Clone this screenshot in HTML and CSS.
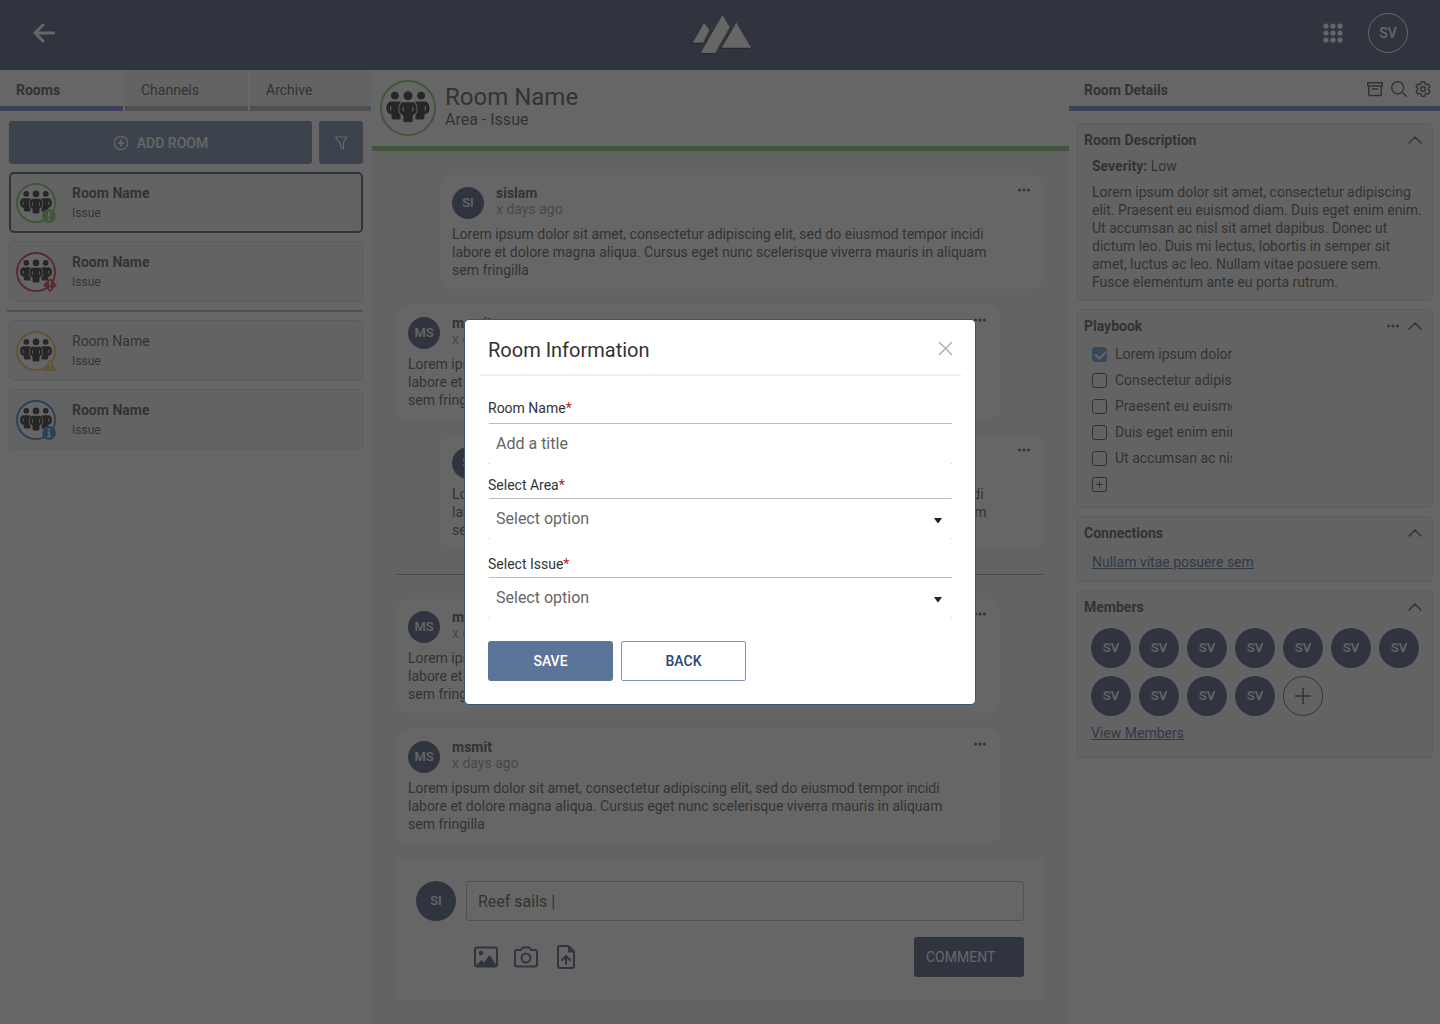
FILE: index.html
```html
<!DOCTYPE html>
<html lang="en">
  <head>
    <meta charset="UTF-8" />
    <meta name="viewport" content="width=device-width, initial-scale=1.0" />
    <title>Room Information</title>
    <link rel="stylesheet" href="styles.css">
  </head>
  <body>
    <!-- shared icons -->
    <svg class="sprite" aria-hidden="true">
      <symbol id="people" viewBox="0 0 40 40">
        <g fill="#000">
          <circle cx="10.3" cy="10.8" r="2.9" />
          <circle cx="29.7" cy="10.8" r="2.9" />
          <path d="M7.5 15.2h7v13.3H9.2a1.4 1.4 0 0 1-1.4-1.4v-2.2C5.4 24.2 4 22.8 4 20.3c0-2.6 1.3-5.1 3.5-5.1z" />
          <path d="M32.5 15.2h-7v13.3h5.3a1.4 1.4 0 0 0 1.4-1.4v-2.2c2.4-.7 3.8-2.1 3.8-4.6 0-2.6-1.3-5.1-3.5-5.1z" />
          <path d="M16.5 15.8h7c2 0 3 3 3 5.2s-1.2 3.8-3 4.6V29a1.6 1.6 0 0 1-1.6 1.6h-3.8A1.6 1.6 0 0 1 16.500 29v-3.4c-1.8-.8-3-2.4-3-4.6s1-5.2 3-5.2z" stroke="#fff" stroke-width="1.2" paint-order="stroke" />
          <circle cx="20" cy="10.9" r="3.3" />
        </g>
        <path d="M7.200 19v2.600M32.800 19v2.600M16.400 19.500v2.800M23.600 19.500v2.800" stroke="#fff" stroke-width=".8" stroke-linecap="round" />
      </symbol>
      <symbol id="chevron" viewBox="0 0 14 8">
        <path d="M1 7l6-6 6 6" fill="none" stroke="currentColor" stroke-width="1.5" stroke-linecap="round" stroke-linejoin="round" />
      </symbol>
      <symbol id="dots" viewBox="0 0 12 4">
        <g fill="currentColor"><circle cx="1.600" cy="2" r="1.5" /><circle cx="6" cy="2" r="1.5" /><circle cx="10.400" cy="2" r="1.5" /></g>
      </symbol>
    </svg>

    <div class="app">
      <header class="topbar">
        <button class="icon-btn back" aria-label="Back">
          <svg width="24" height="20" viewBox="0 0 24 20"><path d="M11 2L3 10l8 8M3.500 10H21.500" fill="none" stroke="#fff" stroke-width="3" stroke-linecap="round" stroke-linejoin="round" /></svg>
        </button>
        <svg class="logo" width="64" height="44" viewBox="24 33 192 132">
          <g fill="#060803" transform="translate(-4 4)">
            <path d="M72 69l16 21-19 38H38zM127 45l22 37-44 77H62zM169 68l44 75h-88z" />
          </g>
          <path d="M72 69l16 21-19 38H38zM127 45l22 37-44 77H62zM169 68l44 75h-88z" fill="#fff" />
        </svg>
        <div class="topbar-right">
          <button class="icon-btn" aria-label="Apps">
            <svg width="20" height="20" viewBox="0 0 20 20"><g fill="#fff"><circle cx="3" cy="3" r="2.600" /><circle cx="10" cy="3" r="2.600" /><circle cx="17" cy="3" r="2.600" /><circle cx="3" cy="10" r="2.600" /><circle cx="10" cy="10" r="2.600" /><circle cx="17" cy="10" r="2.600" /><circle cx="3" cy="17" r="2.600" /><circle cx="10" cy="17" r="2.600" /><circle cx="17" cy="17" r="2.600" /></g></svg>
          </button>
          <button class="profile">SV</button>
        </div>
      </header>

      <div class="columns">
        <aside class="rooms">
          <nav class="tabs">
            <a class="tab active" href="#">Rooms</a>
            <a class="tab" href="#">Channels</a>
            <a class="tab" href="#">Archive</a>
          </nav>
          <div class="rooms-body">
            <div class="room-actions">
              <button class="add-room">
                <svg width="16" height="16" viewBox="0 0 16 16"><path d="M8 5v6M5 8h6" stroke="currentColor" stroke-width="1.4" stroke-linecap="round" /><circle cx="8" cy="8" r="6.7" fill="none" stroke="currentColor" stroke-width="1.2" /></svg>
                ADD ROOM
              </button>
              <button class="filter" aria-label="Filter">
                <svg width="14" height="14" viewBox="0 0 14 14"><path d="M1.500 1h11.500L9.500 6.500V13L6.500 10.500V8z" fill="none" stroke="currentColor" stroke-width="1.2" stroke-linejoin="round" /></svg>
              </button>
            </div>

            <a class="room selected" href="#">
              <svg class="room-icon green" viewBox="0 0 40 40">
                <circle class="ring" cx="20" cy="20" r="19" /><use href="#people" />
                <circle class="badge" cx="33" cy="33" r="7" />
                <path d="M33 29.500v3.500" stroke="#fff" stroke-width="2" stroke-linecap="round" /><circle cx="33" cy="36.600" r="1.100" fill="#fff" />
              </svg>
              <div><div class="room-name">Room Name</div><div class="room-issue">Issue</div></div>
            </a>
            <a class="room" href="#">
              <svg class="room-icon red" viewBox="0 0 40 40">
                <circle class="ring" cx="20" cy="20" r="19" /><use href="#people" />
                <path class="badge" d="M34 26l7 7-7 7-7-7z" />
                <path d="M34 29.500v3.500" stroke="#fff" stroke-width="1.600" stroke-linecap="round" /><circle cx="34" cy="36.300" r="1" fill="#fff" />
              </svg>
              <div><div class="room-name">Room Name</div><div class="room-issue">Issue</div></div>
            </a>
            <hr class="divider">
            <a class="room read" href="#">
              <svg class="room-icon yellow" viewBox="0 0 40 40">
                <circle class="ring" cx="20" cy="20" r="19" /><use href="#people" />
                <path class="badge" d="M34 28l7 12H27z" />
                <path d="M34 31.500v3.500" stroke="#fff" stroke-width="1.400" stroke-linecap="round" /><circle cx="34" cy="37.500" r=".9" fill="#fff" />
              </svg>
              <div><div class="room-name">Room Name</div><div class="room-issue">Issue</div></div>
            </a>
            <a class="room" href="#">
              <svg class="room-icon blue" viewBox="0 0 40 40">
                <circle class="ring" cx="20" cy="20" r="19" /><use href="#people" />
                <circle class="badge" cx="33" cy="33" r="7" />
                <path d="M31.500 32.200h1.700v4M31.300 36.400h3.600" fill="none" stroke="#fff" stroke-width="1.500" /><circle cx="32.900" cy="29.500" r="1.100" fill="#fff" />
              </svg>
              <div><div class="room-name">Room Name</div><div class="room-issue">Issue</div></div>
            </a>
          </div>
        </aside>

        <main class="chat">
          <div class="chat-head">
            <svg class="chat-icon" viewBox="0 0 56 56">
              <circle cx="28" cy="28" r="27" fill="#fff" stroke="#63bf50" stroke-width="2" />
              <use href="#people" x="1" y="1" width="54" height="54" />
            </svg>
            <div>
              <h1>Room Name</h1>
              <p>Area - Issue</p>
            </div>
          </div>

          <div class="feed">
            <article class="message mine">
              <div class="message-head">
                <span class="avatar small">SI</span>
                <div class="meta"><div class="author">sislam</div><div class="time">x days ago</div></div>
                <button class="icon-btn more" aria-label="More"><svg width="12" height="4"><use href="#dots" /></svg></button>
              </div>
              <p>Lorem ipsum dolor sit amet, consectetur adipiscing elit, sed do eiusmod tempor incidi<br>labore et dolore magna aliqua. Cursus eget nunc scelerisque viverra mauris in aliquam<br>sem fringilla</p>
            </article>
            <article class="message">
              <div class="message-head">
                <span class="avatar small">MS</span>
                <div class="meta"><div class="author">msmit</div><div class="time">x days ago</div></div>
                <button class="icon-btn more" aria-label="More"><svg width="12" height="4"><use href="#dots" /></svg></button>
              </div>
              <p>Lorem ipsum dolor sit amet, consectetur adipiscing elit, sed do eiusmod tempor incidi<br>labore et dolore magna aliqua. Cursus eget nunc scelerisque viverra mauris in aliquam<br>sem fringilla</p>
            </article>
            <article class="message mine">
              <div class="message-head">
                <span class="avatar small">SI</span>
                <div class="meta"><div class="author">sislam</div><div class="time">x days ago</div></div>
                <button class="icon-btn more" aria-label="More"><svg width="12" height="4"><use href="#dots" /></svg></button>
              </div>
              <p>Lorem ipsum dolor sit amet, consectetur adipiscing elit, sed do eiusmod tempor incidi<br>labore et dolore magna aliqua. Cursus eget nunc scelerisque viverra mauris in aliquam<br>sem fringilla</p>
            </article>
            <hr class="feed-divider">
            <article class="message">
              <div class="message-head">
                <span class="avatar small">MS</span>
                <div class="meta"><div class="author">msmit</div><div class="time">x days ago</div></div>
                <button class="icon-btn more" aria-label="More"><svg width="12" height="4"><use href="#dots" /></svg></button>
              </div>
              <p>Lorem ipsum dolor sit amet, consectetur adipiscing elit, sed do eiusmod tempor incidi<br>labore et dolore magna aliqua. Cursus eget nunc scelerisque viverra mauris in aliquam<br>sem fringilla</p>
            </article>
            <article class="message">
              <div class="message-head">
                <span class="avatar small">MS</span>
                <div class="meta"><div class="author">msmit</div><div class="time">x days ago</div></div>
                <button class="icon-btn more" aria-label="More"><svg width="12" height="4"><use href="#dots" /></svg></button>
              </div>
              <p>Lorem ipsum dolor sit amet, consectetur adipiscing elit, sed do eiusmod tempor incidi<br>labore et dolore magna aliqua. Cursus eget nunc scelerisque viverra mauris in aliquam<br>sem fringilla</p>
            </article>

            <form class="composer">
              <div class="composer-row">
                <span class="avatar">SI</span>
                <input type="text" aria-label="Comment" value="Reef sails |">
              </div>
              <div class="composer-row tools">
                <button type="button" class="icon-btn" aria-label="Image">
                  <svg width="24" height="24" viewBox="0 0 24 24"><rect x="1" y="2.500" width="22" height="19" rx="2" fill="none" stroke="currentColor" stroke-width="2" /><circle cx="7" cy="8" r="2.200" fill="currentColor" /><path d="M2 20l5.500-5 2.500 2.500 5.500-7.500L22 19.500V21H2z" fill="currentColor" /></svg>
                </button>
                <button type="button" class="icon-btn" aria-label="Camera">
                  <svg width="24" height="24" viewBox="0 0 24 24" fill="none" stroke="currentColor" stroke-width="2"><path d="M3 5h4l1.500-2.500h7L17 5h4a2 2 0 0 1 2 2v12.500a2 2 0 0 1-2 2H3a2 2 0 0 1-2-2V7a2 2 0 0 1 2-2z" stroke-linejoin="round" /><circle cx="12" cy="13" r="4.500" /></svg>
                </button>
                <button type="button" class="icon-btn" aria-label="Upload file">
                  <svg width="24" height="24" viewBox="0 0 24 24"><path d="M14.500 1H6a2 2 0 0 0-2 2v18a2 2 0 0 0 2 2h12a2 2 0 0 0 2-2V6.500z" fill="none" stroke="currentColor" stroke-width="2" stroke-linejoin="round" /><path d="M14 1v6.500h6z" fill="currentColor" /><path d="M12 19v-7M8 15l4-4 4 4" fill="none" stroke="currentColor" stroke-width="2" stroke-linecap="round" stroke-linejoin="round" /></svg>
                </button>
                <button type="button" class="comment-btn">COMMENT</button>
              </div>
            </form>
          </div>
        </main>

        <aside class="details">
          <div class="details-head">
            <h2>Room Details</h2>
            <button class="icon-btn" aria-label="Archive">
              <svg width="16" height="16" viewBox="0 0 16 16" fill="none" stroke="currentColor" stroke-width="1.400" stroke-linejoin="round"><rect x=".7" y="1.700" width="14.600" height="3.300" /><path d="M1.700 5v8.500a1 1 0 0 0 1 1h10.600a1 1 0 0 0 1-1V5M5.500 8h5" stroke-linecap="round" /></svg>
            </button>
            <button class="icon-btn" aria-label="Search">
              <svg width="16" height="16" viewBox="0 0 16 16" fill="none" stroke="currentColor" stroke-width="1.400" stroke-linecap="round"><circle cx="6.700" cy="6.700" r="6" /><path d="M11 11l4.300 4.300" /></svg>
            </button>
            <button class="icon-btn" aria-label="Settings">
              <svg width="16" height="16" viewBox="0 0 16 16" fill="none" stroke="currentColor" stroke-width="1.400" stroke-linejoin="round"><path d="M6.500.8h3l.5 2 1.300.8 2-.6 1.600 2.600-1.400 1.500v1.800l1.400 1.500-1.600 2.600-2-.6-1.300.8-.5 2h-3l-.5-2-1.300-.8-2 .6L1.100 10.400 2.500 8.900V7.100L1.100 5.600 2.700 3l2 .6L6 2.800z" /><circle cx="8" cy="8" r="2.300" /></svg>
            </button>
          </div>

          <div class="panels">
            <section class="panel">
              <div class="panel-head">
                <h3>Room Description</h3>
                <button class="icon-btn" aria-label="Collapse"><svg width="14" height="8"><use href="#chevron" /></svg></button>
              </div>
              <div class="panel-body">
                <p class="severity"><b>Severity:</b> Low</p>
                <p>Lorem ipsum dolor sit amet, consectetur adipiscing<br>elit. Praesent eu euismod diam. Duis eget enim enim.<br>Ut accumsan ac nisl sit amet dapibus. Donec ut<br>dictum leo. Duis mi lectus, lobortis in semper sit<br>amet, luctus ac leo. Nullam vitae posuere sem.<br>Fusce elementum ante eu porta rutrum.</p>
              </div>
            </section>

            <section class="panel">
              <div class="panel-head">
                <h3>Playbook</h3>
                <button class="icon-btn" aria-label="More"><svg width="12" height="4"><use href="#dots" /></svg></button>
                <button class="icon-btn" aria-label="Collapse"><svg width="14" height="8"><use href="#chevron" /></svg></button>
              </div>
              <div class="panel-body checklist">
                <label><input type="checkbox" checked><span>Lorem ipsum dolor</span></label>
                <label><input type="checkbox"><span>Consectetur adipiscing</span></label>
                <label><input type="checkbox"><span>Praesent eu euismod</span></label>
                <label><input type="checkbox"><span>Duis eget enim enim</span></label>
                <label><input type="checkbox"><span>Ut accumsan ac nisl</span></label>
                <button class="icon-btn add-item" aria-label="Add item">
                  <svg width="15" height="15" viewBox="0 0 15 15"><rect x=".5" y=".5" width="14" height="14" rx="1.500" fill="none" stroke="currentColor" /><path d="M7.500 4v7M4 7.500h7" stroke="currentColor" /></svg>
                </button>
              </div>
            </section>

            <section class="panel">
              <div class="panel-head">
                <h3>Connections</h3>
                <button class="icon-btn" aria-label="Collapse"><svg width="14" height="8"><use href="#chevron" /></svg></button>
              </div>
              <div class="panel-body connections">
                <a href="#">Nullam vitae posuere sem</a>
              </div>
            </section>

            <section class="panel">
              <div class="panel-head">
                <h3>Members</h3>
                <button class="icon-btn" aria-label="Collapse"><svg width="14" height="8"><use href="#chevron" /></svg></button>
              </div>
              <div class="panel-body members">
                <div class="member-list">
                  <span class="avatar">SV</span>
                  <span class="avatar">SV</span>
                  <span class="avatar">SV</span>
                  <span class="avatar">SV</span>
                  <span class="avatar">SV</span>
                  <span class="avatar">SV</span>
                  <span class="avatar">SV</span>
                  <span class="avatar">SV</span>
                  <span class="avatar">SV</span>
                  <span class="avatar">SV</span>
                  <span class="avatar">SV</span>
                  <button class="add-member" aria-label="Add member">
                    <svg width="16" height="16" viewBox="0 0 16 16"><path d="M8 0v16M0 8h16" stroke="currentColor" stroke-width="1.500" /></svg>
                  </button>
                </div>
                <a href="#">View Members</a>
              </div>
            </section>
          </div>
        </aside>
      </div>
    </div>

    <div class="overlay">
      <form class="modal" role="dialog" aria-labelledby="modal-title">
        <div class="modal-head">
          <h2 id="modal-title">Room Information</h2>
          <button type="button" class="icon-btn close" aria-label="Close">
            <svg width="15" height="15" viewBox="0 0 15 15"><path d="M1.500 1.500l12 12M13.500 1.500l-12 12" stroke="currentColor" stroke-width="1.700" stroke-linecap="round" /></svg>
          </button>
        </div>
        <div class="modal-body">
          <div class="field title-field">
            <label for="room-name">Room Name<span class="required">*</span></label>
            <input class="control" id="room-name" type="text" placeholder="Add a title">
          </div>
          <div class="field">
            <label for="area">Select Area<span class="required">*</span></label>
            <div class="select">
              <select class="control" id="area"><option>Select option</option></select>
              <svg width="8" height="5" viewBox="0 0 8 5"><path d="M0 0h8L4.500 5h-1z" /></svg>
            </div>
          </div>
          <div class="field">
            <label for="issue">Select Issue<span class="required">*</span></label>
            <div class="select">
              <select class="control" id="issue"><option>Select option</option></select>
              <svg width="8" height="5" viewBox="0 0 8 5"><path d="M0 0h8L4.500 5h-1z" /></svg>
            </div>
          </div>
          <div class="modal-actions">
            <button type="button" class="btn primary">SAVE</button>
            <button type="button" class="btn outline">BACK</button>
          </div>
        </div>
      </form>
    </div>
  </body>
</html>
```
FILE: styles.css
```css
* {
  box-sizing: border-box;
}

body {
  margin: 0;
  font-family: Roboto, "Liberation Sans", sans-serif;
  font-size: 14px;
  line-height: 18px;
  color: #333;
  background-color: #fff;
}

h1, h2, h3, p {
  margin: 0;
}

button, input, select {
  font-family: inherit;
  color: inherit;
}

button {
  cursor: pointer;
}

a {
  color: #2b4a7d;
}

svg {
  display: block;
  flex: none;
}

.sprite {
  position: absolute;
  width: 0;
  height: 0;
}

.icon-btn {
  display: flex;
  padding: 0;
  border: none;
  background: none;
}

.app {
  display: flex;
  flex-direction: column;
  min-height: 100vh;
}

/* top bar */
.topbar {
  display: grid;
  grid-template-columns: 1fr auto 1fr;
  align-items: center;
  height: 70px;
  padding: 0 32px 4px;
  background-color: #2b3b5f;
}

.topbar-right {
  display: flex;
  justify-content: flex-end;
  align-items: center;
  gap: 25px;
}

.profile {
  width: 40px;
  height: 40px;
  padding: 0;
  border: 1px solid #fff;
  border-radius: 50%;
  background: none;
  color: #fff;
  font-size: 14px;
  font-weight: 500;
}

.columns {
  flex: 1;
  display: grid;
  grid-template-columns: 372px 1fr 371px;
}

/* left column */
.tabs {
  display: grid;
  grid-template-columns: 123px 123px 1fr;
  gap: 2px;
  padding-right: 1px;
}

.tab {
  height: 41px;
  padding: 11px 16px 0;
  border-bottom: 5px solid #98a8b4;
  background-color: #f4f4f4;
  color: #333;
  text-decoration: none;
}

.tab.active {
  border-color: #5b67c8;
  background-color: #fff;
  font-weight: 700;
}

.rooms-body {
  display: flex;
  flex-direction: column;
  gap: 8px;
  padding: 10px 9px;
}

.room-actions {
  display: flex;
  gap: 7px;
}

.add-room,
.filter {
  display: flex;
  justify-content: center;
  align-items: center;
  gap: 8px;
  height: 43px;
  border: none;
  border-radius: 3px;
  background-color: #5b7599;
  color: #fff;
  font-size: 14px;
  font-weight: 500;
}

.add-room {
  flex: 1;
}

.filter {
  width: 44px;
}

.room {
  display: flex;
  align-items: center;
  gap: 16px;
  height: 61px;
  padding: 0 6px;
  border: 1px solid #d8d8d8;
  border-radius: 5px;
  background-color: #f4f4f4;
  color: #333;
  text-decoration: none;
}

.room.selected {
  padding: 0 5px;
  border: 2px solid #24384a;
}

.room-icon {
  width: 40px;
  height: 40px;
  overflow: visible;
}

.ring {
  fill: #fff;
  stroke: currentColor;
  stroke-width: 2;
}

.badge {
  fill: currentColor;
}

.green { color: #63bf50; }
.red { color: #c8141c; }
.yellow { color: #e8b840; }
.blue { color: #1f6cc0; }

.room-name {
  line-height: 20px;
  font-weight: 700;
}

.read .room-name {
  font-weight: 400;
}

.room-issue {
  font-size: 12px;
  line-height: 20px;
}

.divider {
  width: calc(100% + 2px);
  margin: 0 0 0 -2px;
  border: none;
  border-top: 2px solid #aaa;
}

/* chat */
.chat {
  display: flex;
  flex-direction: column;
  background-color: #f1f1f1;
}

.chat-head {
  display: flex;
  gap: 9px;
  height: 81px;
  padding: 10px 8px 0;
  border-bottom: 5px solid #63bf50;
  background-color: #fff;
}

.chat-icon {
  width: 56px;
  height: 56px;
}

.chat-head h1 {
  padding-top: 3px;
  font-size: 24px;
  font-weight: 400;
  line-height: 28px;
}

.chat-head p {
  font-size: 16px;
  line-height: 18px;
}

.feed {
  display: flex;
  flex-direction: column;
  gap: 16px;
  padding: 24px 25px 24px 24px;
}

.message {
  width: calc(100% - 44px);
  padding: 12px 12px 10px;
  border-radius: 12px;
  background-color: #fff;
}

.message.mine {
  align-self: flex-end;
}

.message-head {
  display: flex;
  gap: 12px;
  margin-bottom: 6px;
  line-height: 16px;
}

.meta {
  margin-top: -2px;
}

.author {
  font-weight: 700;
}

.time {
  color: #888;
}

.more {
  margin: 1px 2px 0 auto;
  height: 4px;
}

.avatar {
  display: flex;
  justify-content: center;
  align-items: center;
  flex: none;
  width: 40px;
  height: 40px;
  border-radius: 50%;
  background-color: #2b3b5f;
  color: #fff;
  font-size: 13px;
  font-weight: 500;
}

.avatar.small {
  width: 32px;
  height: 32px;
}

.feed-divider {
  width: 100%;
  margin: 9px 0 8px;
  border: none;
  border-top: 1px solid #888;
}

.composer {
  padding: 22px 20px;
  border-radius: 4px;
  background-color: #fff;
}

.composer-row {
  display: flex;
  align-items: center;
  gap: 10px;
}

.composer input {
  flex: 1;
  height: 40px;
  padding: 0 11px;
  border: 1px solid #aaa;
  border-radius: 3px;
  background: none;
  font-size: 16px;
}

.tools {
  gap: 16px;
  margin-top: 16px;
  padding-left: 58px;
  color: #2b3b5f;
}

.comment-btn {
  width: 110px;
  height: 40px;
  margin-left: auto;
  padding: 0 12px;
  border: none;
  border-radius: 3px;
  background-color: #2b3b5f;
  color: #fff;
  font-size: 14px;
  text-align: left;
}

/* right column */
.details-head {
  display: flex;
  align-items: center;
  gap: 8px;
  height: 41px;
  padding: 2px 9px 0 15px;
  border-bottom: 5px solid #5b67c8;
}

.details-head h2 {
  flex: 1;
  padding-top: 2px;
  font-size: 14px;
  line-height: 18px;
}

.panels {
  display: flex;
  flex-direction: column;
  gap: 8px;
  padding: 12px 7px 12px 8px;
}

.panel {
  padding: 6px 10px 9px 6px;
  border: 1px solid #d8d8d8;
  border-radius: 5px;
  background-color: #f4f4f4;
}

.panel-head {
  display: flex;
  align-items: center;
  gap: 9px;
  height: 20px;
}

.panel-head h3 {
  flex: 1;
  font-size: 14px;
  line-height: 20px;
}

.panel-body {
  padding: 7px 0 0 8px;
}

.severity {
  margin-bottom: 8px;
}

.checklist {
  display: flex;
  flex-direction: column;
  gap: 8px;
  padding: 9px 0 4px 8px;
}

.checklist label {
  display: flex;
  align-items: center;
  gap: 8px;
}

.checklist input {
  position: relative;
  appearance: none;
  width: 15px;
  height: 15px;
  margin: 0;
  border: 1px solid #333;
  border-radius: 3px;
}

.checklist input:checked {
  border-color: #4089d0;
  background-color: #4089d0;
}

.checklist input:checked::after {
  content: "";
  position: absolute;
  left: 4px;
  top: 1px;
  width: 5px;
  height: 8px;
  border: solid #fff;
  border-width: 0 2px 2px 0;
  transform: rotate(45deg);
}

.checklist span {
  width: 117px;
  overflow: hidden;
  white-space: nowrap;
}

.add-item {
  align-self: flex-start;
  padding: 2px 0;
}

.connections {
  padding: 10px 0 1px 8px;
}

.members {
  padding: 11px 0 6px 7px;
}

.member-list {
  display: flex;
  flex-wrap: wrap;
  gap: 8px;
  margin: 0 -8px 8px 0;
}

.add-member {
  display: flex;
  justify-content: center;
  align-items: center;
  width: 40px;
  height: 40px;
  padding: 0;
  border: 1px solid #333;
  border-radius: 50%;
  background: none;
}

/* modal */
.overlay {
  position: fixed;
  inset: 0;
  display: flex;
  justify-content: center;
  align-items: center;
  background-color: rgba(51, 51, 51, 0.75);
}

.modal {
  width: 512px;
  max-width: 100%;
  padding: 15px 14px 23px 15px;
  border: 1px solid #3d5375;
  border-radius: 5px;
  background-color: #fff;
}

.modal-head {
  display: flex;
  justify-content: space-between;
  padding: 3px 8px 12px;
  border-bottom: 2px solid #f0f0f0;
}

.modal-head h2 {
  font-size: 20px;
  font-weight: 400;
  line-height: 24px;
}

.close {
  height: 15px;
  margin-top: 3px;
  color: #b0b8bb;
}

.modal-body {
  padding: 23px 8px 0;
}

.field {
  display: flex;
  flex-direction: column;
  gap: 4px;
  margin-bottom: 16px;
}

.title-field {
  gap: 6px;
  margin-bottom: 12px;
}

.required {
  color: #b71c1c;
}

/* only the top edge and the bottom corners of a field are drawn */
.control {
  width: 100%;
  height: 41px;
  padding: 0 7px;
  border: 1px solid transparent;
  border-top-color: #bbb;
  border-radius: 2px;
  appearance: none;
  background:
    linear-gradient(#ccc, #ccc) left bottom / 2px 1px no-repeat border-box,
    linear-gradient(#ccc, #ccc) right bottom / 2px 1px no-repeat border-box;
  font-size: 16px;
  color: #666;
}

.control::placeholder {
  color: #666;
}

.select {
  position: relative;
}

.select svg {
  position: absolute;
  right: 11px;
  top: 20px;
  fill: #222;
}

.modal-actions {
  display: flex;
  gap: 8px;
  margin-top: 23px;
}

.btn {
  width: 125px;
  height: 40px;
  border-radius: 3px;
  font-size: 14px;
  font-weight: 500;
}

.primary {
  border: none;
  background-color: #5b7599;
  color: #fff;
}

.outline {
  border: 1px solid #8094b5;
  border-radius: 2px;
  background-color: #fff;
  color: #2b4573;
}
```
